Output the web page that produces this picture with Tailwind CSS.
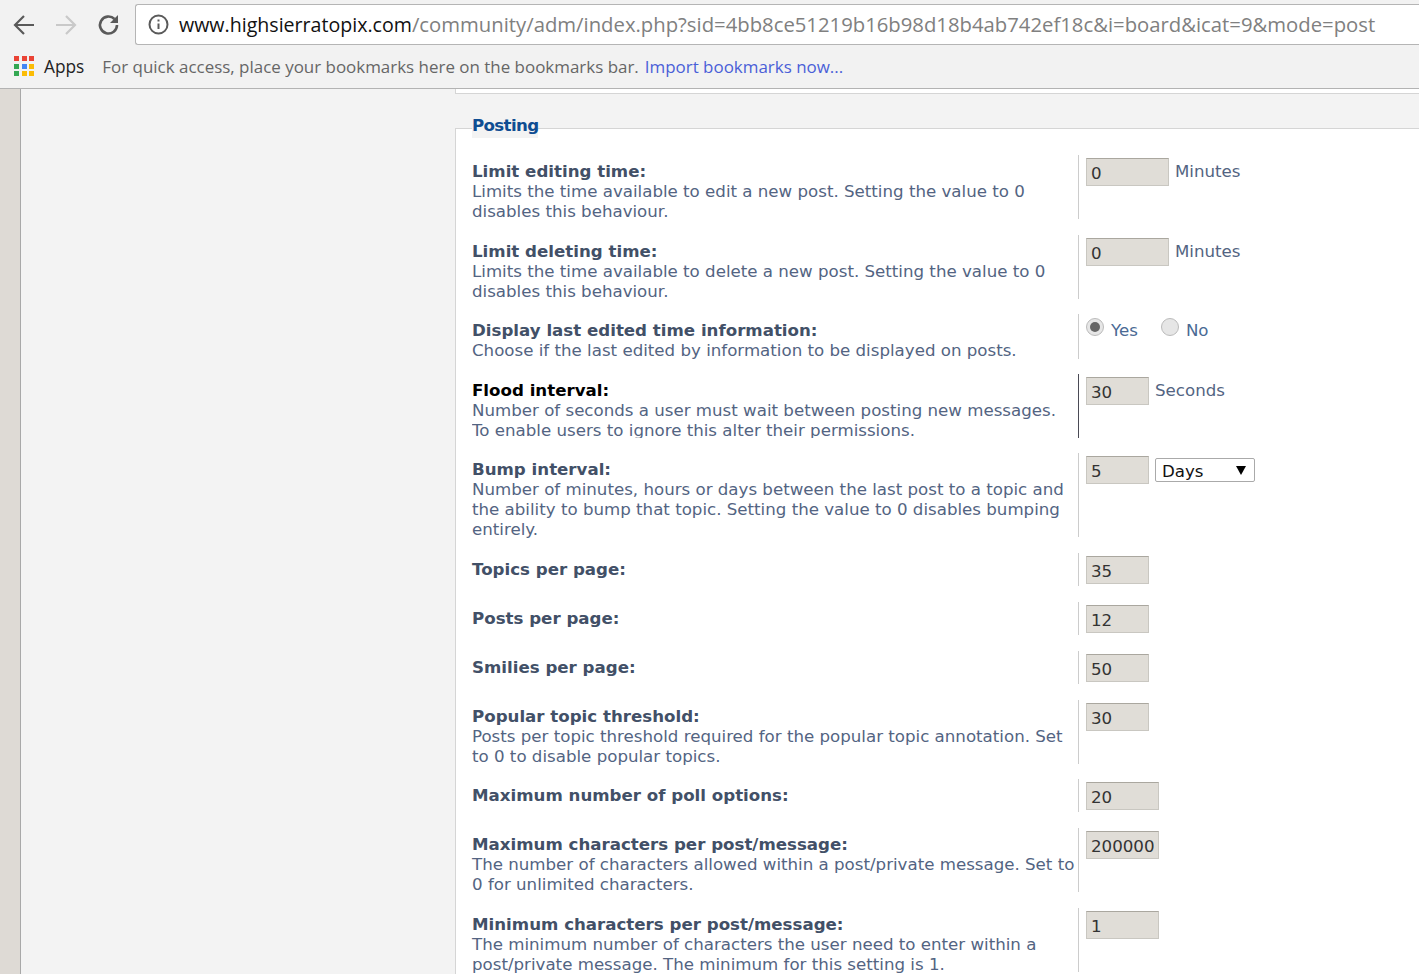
<!DOCTYPE html>
<html lang="en">
<head>
<meta charset="utf-8" />
<title>Board settings</title>
<script src="https://cdn.jsdelivr.net/npm/@tailwindcss/browser@4"></script>
</head>
<body class="h-[974px] w-[1419px] overflow-hidden bg-[#f3f3f3] font-['DejaVu_Sans',sans-serif]">

<!-- browser toolbar -->
<div class="h-[44px] flex items-center bg-[#f2f2f2] pt-[5px]">
    <button class="w-[48px] pl-[12px] flex">
        <svg width="24" height="24" viewBox="0 0 24 24" fill="none" stroke="#5a5a5a" stroke-width="2.200"><path d="M22 12H3M12 3l-9 9 9 9"/></svg>
    </button>
    <button class="w-[36px] pl-[6px] flex">
        <svg width="24" height="24" viewBox="0 0 24 24" fill="none" stroke="#c9c9c9" stroke-width="2.200"><path d="M2 12h19M12 3l9 9-9 9"/></svg>
    </button>
    <button class="w-[51px] pl-[13px] flex">
        <svg width="24" height="24" viewBox="0 0 24 24" fill="none" stroke="#5a5a5a" stroke-width="2.600"><path d="M20 12a8.500 8.500 0 1 1-2.500-6"/><path d="M21 2v8h-8" fill="#5a5a5a" stroke="none"/></svg>
    </button>
    <div class="flex-1 h-[41px] flex items-center bg-white border border-[#b5b5b5] border-r-0 rounded-l-[3px] pl-[12px] whitespace-nowrap overflow-hidden font-['Open_Sans',sans-serif] text-[20.300px]">
        <svg class="mr-[10px] shrink-0" width="21" height="21" viewBox="0 0 21 21" fill="none" stroke="#5a5a5a" stroke-width="2"><circle cx="10.500" cy="10.500" r="9"/><path d="M10.500 9.500v5.500M10.500 5.500v2"/></svg>
        <span class="text-[#111] text-[19.600px]">www.highsierratopix.com</span><span class="text-[#808080]">/community/adm/index.php?sid=4bb8ce51219b16b98d18b4ab742ef18c&amp;i=board&amp;icat=9&amp;mode=post</span>
    </div>
</div>

<!-- bookmarks bar -->
<div class="h-[45px] flex items-center bg-[#f2f2f2] border-b border-[#b3b3b3] pl-[14px] font-['Open_Sans',sans-serif] text-[16.950px] whitespace-nowrap">
    <div class="grid grid-cols-3 gap-[2.500px] w-[20px] mr-[10px]">
        <i class="h-[5px] bg-[#ea4335]"></i><i class="h-[5px] bg-[#ea4335]"></i><i class="h-[5px] bg-[#ea4335]"></i>
        <i class="h-[5px] bg-[#34a853]"></i><i class="h-[5px] bg-[#4285f4]"></i><i class="h-[5px] bg-[#fbbc05]"></i>
        <i class="h-[5px] bg-[#34a853]"></i><i class="h-[5px] bg-[#fbbc05]"></i><i class="h-[5px] bg-[#fbbc05]"></i>
    </div>
    <span class="text-[#222] mr-[18px] mt-[2px] text-[17.300px]">Apps</span>
    <span class="text-[#666] mr-[6px] mt-[2px]">For quick access, place your bookmarks here on the bookmarks bar.</span>
    <a class="text-[#4a5fd8] mt-[2px]">Import bookmarks now...</a>
</div>

<!-- page -->
<div class="flex h-[885px] overflow-hidden">
    <div class="w-[21px] shrink-0 bg-[#dedad5] border-r border-[#a8a8a8]"></div>
    <div class="w-[434px] shrink-0"></div>
    <div class="flex-1">
        <div class="h-[5px] bg-white border-l border-b border-[#d5d5d5]"></div>
        <div class="relative mt-[34px] bg-white border-t border-l border-[#d5d5d5] pl-[16px] pt-[26px] h-[900px]">
            <span class="absolute top-[-15px] left-[16px] bg-[#f3f3f3] text-[16.650px] leading-[24px] font-bold text-[#0f4d92] tracking-[-0.650px]">Posting</span>
            <div class="flex h-[80px]">
                <div class="w-[606px] pt-[7px] text-[16.650px] leading-[20px] text-[#536482]"><b class="text-[#425067]">Limit editing time:</b><br>Limits the time available to edit a new post. Setting the value to 0 disables this behaviour.</div>
                <div class="flex items-start h-[64px] border-l border-[#cccccc] pl-[7px] pt-[3px] text-[16.650px] text-[#536482]">
                    <input class="w-[83px] h-[28px] px-[4px] pt-[2px] bg-[#e0ddd7] border border-[#c9c7c1] border-t-[#aaa79f] text-[16.650px] text-[#333]" value="0"><span class="ml-[6px] mt-[2px]">Minutes</span>
                </div>
            </div>
            <div class="flex h-[79px]">
                <div class="w-[606px] pt-[7px] text-[16.650px] leading-[20px] text-[#536482]"><b class="text-[#425067]">Limit deleting time:</b><br>Limits the time available to delete a new post. Setting the value to 0 disables this behaviour.</div>
                <div class="flex items-start h-[64px] border-l border-[#cccccc] pl-[7px] pt-[3px] text-[16.650px] text-[#536482]">
                    <input class="w-[83px] h-[28px] px-[4px] pt-[2px] bg-[#e0ddd7] border border-[#c9c7c1] border-t-[#aaa79f] text-[16.650px] text-[#333]" value="0"><span class="ml-[6px] mt-[2px]">Minutes</span>
                </div>
            </div>
            <div class="flex h-[60px]">
                <div class="w-[606px] pt-[7px] text-[16.650px] leading-[20px] text-[#536482]"><b class="text-[#425067]">Display last edited time information:</b><br>Choose if the last edited by information to be displayed on posts.</div>
                <div class="flex items-start h-[45px] border-l border-[#cccccc] pl-[7px] pt-[3px] text-[16.650px] text-[#536482]">
                    <span class="w-[18px] h-[18px] mt-[1px] rounded-full border border-[#bbb] bg-[#e6e6e6] flex items-center justify-center"><i class="w-[10px] h-[10px] rounded-full bg-[#666]"></i></span><span class="ml-[7px] mt-[2px] text-[#4a6a94]">Yes</span>
                    <span class="ml-[23px] w-[18px] h-[18px] mt-[1px] rounded-full border border-[#bbb] bg-[#e6e6e6]"></span><span class="ml-[7px] mt-[2px] text-[#4a6a94]">No</span>
                </div>
            </div>
            <div class="flex h-[79px]">
                <div class="w-[606px] h-[64px] overflow-hidden pt-[7px] text-[16.650px] leading-[20px] text-[#536482]"><b class="text-black">Flood interval:</b><br>Number of seconds a user must wait between posting new messages. To enable users to ignore this alter their permissions.</div>
                <div class="flex items-start h-[64px] border-l border-[#4a4a55] pl-[7px] pt-[3px] text-[16.650px] text-[#536482]">
                    <input class="w-[63px] h-[28px] px-[4px] pt-[2px] bg-[#e0ddd7] border border-[#c9c7c1] border-t-[#aaa79f] text-[16.650px] text-[#333]" value="30"><span class="ml-[6px] mt-[2px]">Seconds</span>
                </div>
            </div>
            <div class="flex h-[100px]">
                <div class="w-[606px] pt-[7px] text-[16.650px] leading-[20px] text-[#536482]"><b class="text-[#425067]">Bump interval:</b><br>Number of minutes, hours or days between the last post to a topic and the ability to bump that topic. Setting the value to 0 disables bumping entirely.</div>
                <div class="flex items-start h-[84px] border-l border-[#cccccc] pl-[7px] pt-[3px] text-[16.650px] text-[#536482]">
                    <input class="w-[63px] h-[28px] px-[4px] pt-[2px] bg-[#e0ddd7] border border-[#c9c7c1] border-t-[#aaa79f] text-[16.650px] text-[#333]" value="5">
                    <span class="ml-[6px] mt-[2px] w-[100px] h-[24px] flex items-center justify-between bg-white border border-[#aaa] rounded-[2px] pl-[6px] pr-[8px] pt-[5px] text-[#111]">Days<i class="w-0 h-0 -mt-[5px] border-x-[5px] border-x-transparent border-t-[9px] border-t-black"></i></span>
                </div>
            </div>
            <div class="flex h-[49px]">
                <div class="w-[606px] pt-[7px] text-[16.650px] leading-[20px] text-[#536482]"><b class="text-[#425067]">Topics per page:</b></div>
                <div class="flex items-start h-[33px] border-l border-[#cccccc] pl-[7px] pt-[3px]">
                    <input class="w-[63px] h-[28px] px-[4px] pt-[2px] bg-[#e0ddd7] border border-[#c9c7c1] border-t-[#aaa79f] text-[16.650px] text-[#333]" value="35">
                </div>
            </div>
            <div class="flex h-[49px]">
                <div class="w-[606px] pt-[7px] text-[16.650px] leading-[20px] text-[#536482]"><b class="text-[#425067]">Posts per page:</b></div>
                <div class="flex items-start h-[33px] border-l border-[#cccccc] pl-[7px] pt-[3px]">
                    <input class="w-[63px] h-[28px] px-[4px] pt-[2px] bg-[#e0ddd7] border border-[#c9c7c1] border-t-[#aaa79f] text-[16.650px] text-[#333]" value="12">
                </div>
            </div>
            <div class="flex h-[49px]">
                <div class="w-[606px] pt-[7px] text-[16.650px] leading-[20px] text-[#536482]"><b class="text-[#425067]">Smilies per page:</b></div>
                <div class="flex items-start h-[33px] border-l border-[#cccccc] pl-[7px] pt-[3px]">
                    <input class="w-[63px] h-[28px] px-[4px] pt-[2px] bg-[#e0ddd7] border border-[#c9c7c1] border-t-[#aaa79f] text-[16.650px] text-[#333]" value="50">
                </div>
            </div>
            <div class="flex h-[79px]">
                <div class="w-[606px] pt-[7px] text-[16.650px] leading-[20px] text-[#536482]"><b class="text-[#425067]">Popular topic threshold:</b><br>Posts per topic threshold required for the popular topic annotation. Set to 0 to disable popular topics.</div>
                <div class="flex items-start h-[64px] border-l border-[#cccccc] pl-[7px] pt-[3px]">
                    <input class="w-[63px] h-[28px] px-[4px] pt-[2px] bg-[#e0ddd7] border border-[#c9c7c1] border-t-[#aaa79f] text-[16.650px] text-[#333]" value="30">
                </div>
            </div>
            <div class="flex h-[49px]">
                <div class="w-[606px] pt-[7px] text-[16.650px] leading-[20px] text-[#536482]"><b class="text-[#425067]">Maximum number of poll options:</b></div>
                <div class="flex items-start h-[33px] border-l border-[#cccccc] pl-[7px] pt-[3px]">
                    <input class="w-[73px] h-[28px] px-[4px] pt-[2px] bg-[#e0ddd7] border border-[#c9c7c1] border-t-[#aaa79f] text-[16.650px] text-[#333]" value="20">
                </div>
            </div>
            <div class="flex h-[80px]">
                <div class="w-[606px] pt-[7px] text-[16.650px] leading-[20px] text-[#536482]"><b class="text-[#425067]">Maximum characters per post/message:</b><br>The number of characters allowed within a post/private message. Set to 0 for unlimited characters.</div>
                <div class="flex items-start h-[64px] border-l border-[#cccccc] pl-[7px] pt-[3px]">
                    <input class="w-[73px] h-[28px] px-[4px] pt-[2px] bg-[#e0ddd7] border border-[#c9c7c1] border-t-[#aaa79f] text-[16.650px] text-[#333]" value="200000">
                </div>
            </div>
            <div class="flex h-[80px]">
                <div class="w-[606px] pt-[7px] text-[16.650px] leading-[20px] text-[#536482]"><b class="text-[#425067]">Minimum characters per post/message:</b><br>The minimum number of characters the user need to enter within a post/private message. The minimum for this setting is 1.</div>
                <div class="flex items-start h-[64px] border-l border-[#cccccc] pl-[7px] pt-[3px]">
                    <input class="w-[73px] h-[28px] px-[4px] pt-[2px] bg-[#e0ddd7] border border-[#c9c7c1] border-t-[#aaa79f] text-[16.650px] text-[#333]" value="1">
                </div>
            </div>
        </div>
    </div>
</div>
</body>
</html>
